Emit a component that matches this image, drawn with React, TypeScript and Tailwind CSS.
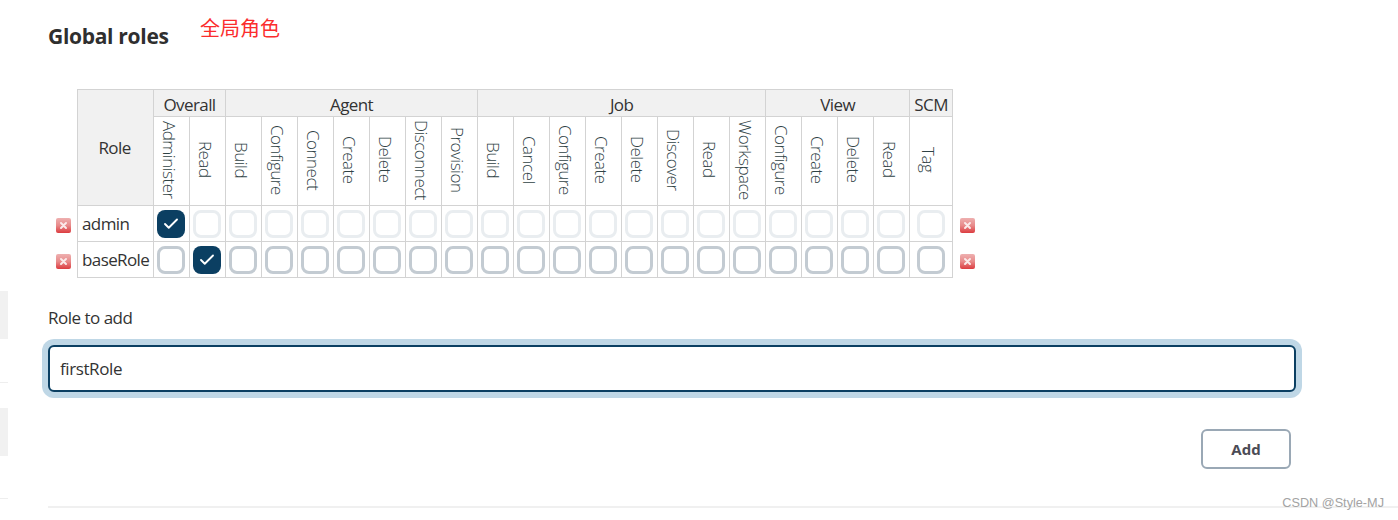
import { Check } from "lucide-react";

const groups = [
  { name: "Overall", perms: ["Administer", "Read"] },
  { name: "Agent", perms: ["Build", "Configure", "Connect", "Create", "Delete", "Disconnect", "Provision"] },
  { name: "Job", perms: ["Build", "Cancel", "Configure", "Create", "Delete", "Discover", "Read", "Workspace"] },
  { name: "View", perms: ["Configure", "Create", "Delete", "Read"] },
  { name: "SCM", perms: ["Tag"] },
];

const perms = groups.flatMap((g) => g.perms);

const roles = [
  { name: "admin", checked: 0, faded: true },
  { name: "baseRole", checked: 1, faded: false },
];

const DeleteIcon = () => (
  <svg width="15" height="15" viewBox="0 0 15 15" className="block">
    <defs>
      <linearGradient id="del" x1="0" y1="0" x2="0" y2="1">
        <stop offset="0" stopColor="#eeb0b0" />
        <stop offset="0.5" stopColor="#e88a8a" />
        <stop offset="1" stopColor="#dc3c40" />
      </linearGradient>
    </defs>
    <rect width="15" height="15" rx="2" fill="url(#del)" />
    <path d="M5 5l5 5M10 5l-5 5" stroke="#fbeaea" strokeWidth="2" strokeLinecap="round" />
  </svg>
);

const Box = ({ checked, faded }: { checked: boolean; faded: boolean }) =>
  checked ? (
    <div className="w-7 h-7 mx-auto rounded-lg bg-[#0b3f62] flex items-center justify-center">
      <Check size={18} strokeWidth={2.5} className="text-white" />
    </div>
  ) : (
    <div
      className={
        faded
          ? "w-7 h-7 mx-auto rounded-lg border-[3px] border-[#e9edf0] bg-white"
          : "w-7 h-7 mx-auto rounded-lg border-[3px] border-[#c3cbd2] bg-white"
      }
    />
  );

export default function App() {
  return (
    <div className="relative w-[1398px] h-[520px] overflow-hidden bg-white pl-12 font-['Open_Sans','Noto_Sans_CJK_SC',sans-serif] text-[#333]">
      {/* sliver of the sidebar on the left */}
      <div className="absolute left-0 top-[291px] w-2 h-12 bg-[#f1f1f1]" />
      <div className="absolute left-0 top-[382px] w-2 h-px bg-[#eeeeee]" />
      <div className="absolute left-0 top-[408px] w-2 h-12 bg-[#f1f1f1]" />
      <div className="absolute left-0 top-[498px] w-2 h-px bg-[#eeeeee]" />

      <h2 className="pt-[22px] h-[89px] text-[21px] leading-[28px] font-bold text-[#2f2f2f] tracking-[-0.3px]">Global roles</h2>
      <span className="absolute left-[200px] top-[14px] text-[20px] leading-[28px] text-[#fb2d2d] font-['Noto_Sans_CJK_SC',sans-serif]">全局角色</span>

      <div className="flex">
        <div className="w-[29px] pt-[116px] flex flex-col">
          {roles.map((r) => (
            <div key={r.name} className="h-9 pl-2 flex items-center pt-[5px]">
              <DeleteIcon />
            </div>
          ))}
        </div>

        <table className="border-collapse table-fixed w-[875px] h-[188px] text-[17px] tracking-[-0.6px]">
          <colgroup>
            <col className="w-[76px]" />
            {perms.map((p, i) => (
              <col key={i} className={i === perms.length - 1 ? "w-[43px]" : "w-9"} />
            ))}
          </colgroup>
          <thead>
            <tr className="h-[27px]">
              <th rowSpan={2} className="border border-[#d3d3d3] bg-[#f1f1f1] font-normal pr-[2px]">Role</th>
              {groups.map((g) => (
                <th key={g.name} colSpan={g.perms.length} className="border border-[#d3d3d3] bg-[#f1f1f1] font-normal leading-none pt-[3px]">
                  {g.name}
                </th>
              ))}
            </tr>
            <tr className="h-[89px]">
              {perms.map((p, i) => (
                <th key={i} className="border border-[#d3d3d3] font-normal p-0 pr-[5px]">
                  <span className="inline-block [writing-mode:vertical-rl] translate-y-[2px] text-[#2f4245] leading-none text-[17px] tracking-[-0.5px] font-light">{p}</span>
                </th>
              ))}
            </tr>
          </thead>
          <tbody>
            {roles.map((r) => (
              <tr key={r.name} className="h-9">
                <td className="border border-[#d3d3d3] pl-1 pt-px whitespace-nowrap">{r.name}</td>
                {perms.map((p, i) => (
                  <td key={i} className={i === perms.length - 1 ? "border border-[#d3d3d3] p-0" : "border border-[#d3d3d3] p-0 pr-[2px]"}>
                    <Box checked={i === r.checked} faded={r.faded} />
                  </td>
                ))}
              </tr>
            ))}
          </tbody>
        </table>

        <div className="pt-[116px] pl-[7px] flex flex-col">
          {roles.map((r) => (
            <div key={r.name} className="h-9 flex items-center pt-[5px]">
              <DeleteIcon />
            </div>
          ))}
        </div>
      </div>

      <label className="block mt-[28px] h-[39px] text-[17px] leading-[24px] tracking-[-0.5px]">Role to add</label>
      <input
        defaultValue="firstRole"
        className="block w-[1248px] h-[47px] px-[10px] rounded-md border-2 border-[#0b3f62] ring-[6px] ring-[#bfd7e6] outline-none text-[17px] tracking-[-0.4px] text-[#333] bg-white"
      />

      <div className="w-[1243px] flex justify-end mt-[37px]">
        <button className="w-[90px] h-10 rounded-md border-2 border-[#9aa8b5] bg-white text-[15px] font-bold text-[#4b4b55]">Add</button>
      </div>

      <div className="mt-[37px] h-[2px] bg-[#f0f0f0]" />

      <span className="absolute right-[14px] top-[495px] text-[12.7px] leading-4 text-[#a3a3a3] font-['Liberation_Sans',sans-serif]">CSDN @Style-MJ</span>
    </div>
  );
}
